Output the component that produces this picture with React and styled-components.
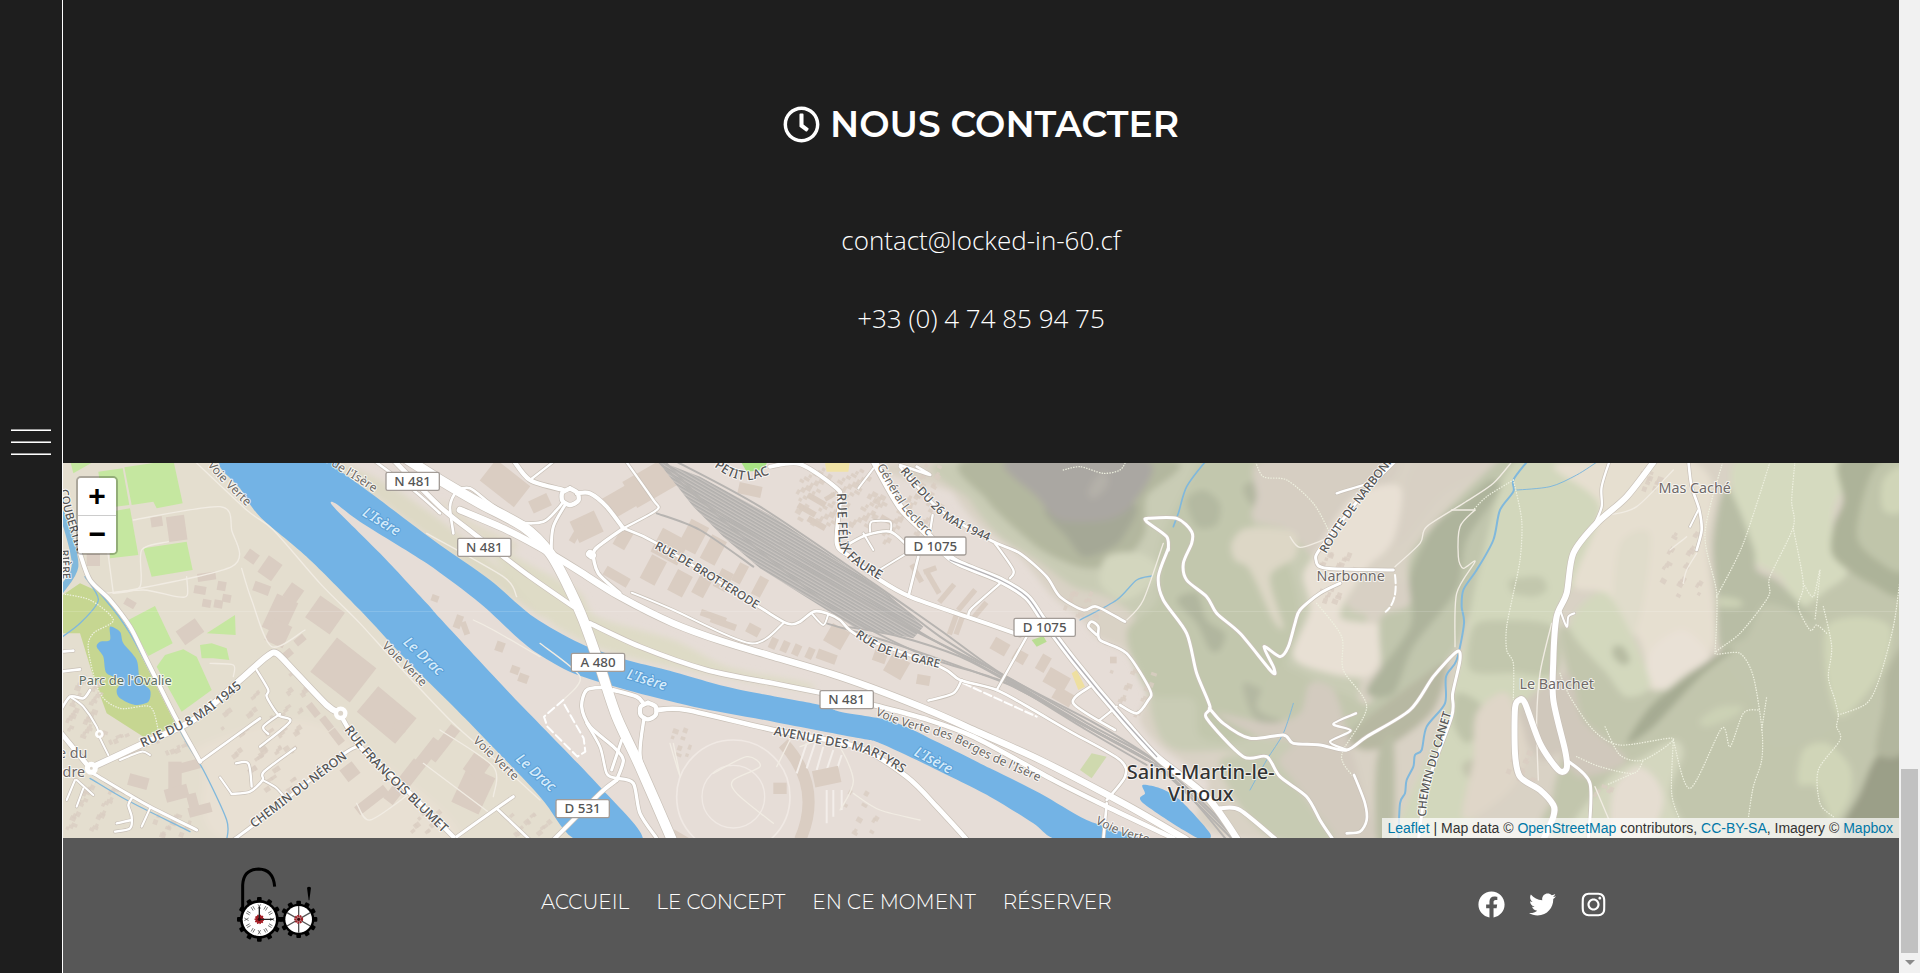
import React from "react";
import styled, { createGlobalStyle } from "styled-components";
import { FaRegClock, FaFacebook, FaTwitter, FaInstagram } from "react-icons/fa";

const GlobalStyle = createGlobalStyle`
  * { box-sizing: border-box; }
  body { margin: 0; background: #1e1e1e; color: #fff; font-family: "Open Sans", sans-serif; }
`;

const Page = styled.div`
  display: flex;
  min-height: 100vh;
`;

const Sidebar = styled.aside`
  flex: 0 0 63px;
  display: flex;
  align-items: center;
  justify-content: center;
  padding-bottom: 90px;
  background: #1e1e1e;
  border-right: 1px solid #fff;
`;

const MenuButton = styled.button`
  display: flex;
  flex-direction: column;
  gap: 10px;
  width: 40px;
  padding: 0;
  border: 0;
  background: none;
  cursor: pointer;
`;

const MenuBar = styled.span`
  height: 2px;
  background: #fff;
  border-top: 1px solid #9a9a9a;
`;

const Main = styled.main`
  flex: 1;
  min-width: 0;
  display: flex;
  flex-direction: column;
`;

const Contact = styled.section`
  display: flex;
  flex-direction: column;
  align-items: center;
  padding: 102px 0 125px;
`;

const Title = styled.h2`
  display: flex;
  align-items: center;
  gap: 10px;
  margin: 0 0 74px;
  font: 600 36px/44px Montserrat, Inter, sans-serif;
  text-transform: uppercase;
`;

const ContactLink = styled.a`
  color: #fff;
  font-size: 26px;
  font-weight: 300;
  line-height: 40px;
  text-decoration: none;
  & + & { margin-top: 38px; }
`;

const MapFrame = styled.section`
  position: relative;
  height: 375px;
  overflow: hidden;
  background: #e6ded4;
`;

const MapDrawing = styled.svg`
  display: block;
  width: 100%;
  height: 100%;
`;

const ZoomControl = styled.div`
  position: absolute;
  top: 13px;
  left: 13px;
  display: flex;
  flex-direction: column;
  border: 2px solid rgba(0, 0, 0, 0.25);
  border-radius: 5px;
`;

const ZoomButton = styled.button`
  width: 38px;
  height: 37px;
  padding: 0;
  border: 0;
  border-radius: 0 0 3px 3px;
  background: #fff;
  color: #000;
  font: 700 30px/40px "Liberation Mono", monospace;
  cursor: pointer;
  &:first-child {
    height: 38px;
    border-bottom: 1px solid #ccc;
    border-radius: 3px 3px 0 0;
  }
`;

const Attribution = styled.div`
  position: absolute;
  right: 0;
  bottom: 0;
  padding: 0 6px;
  background: rgba(255, 255, 255, 0.7);
  color: #333;
  font: 14px/20px "Liberation Sans", sans-serif;
  a { color: #0078a8; text-decoration: none; }
`;

const Footer = styled.footer`
  flex: 1;
  display: grid;
  grid-template-columns: 478fr 937fr 421fr;
  align-items: center;
  min-height: 135px;
  padding-bottom: 3px;
  background: #575757;
`;

const LogoLink = styled.a`
  justify-self: center;
  width: 82px;
  height: 78px;
  margin-right: 50px;
`;

const FooterNav = styled.nav`
  display: flex;
  gap: 27px;
  padding-bottom: 5px;
`;

const NavLink = styled.a`
  color: #fff;
  font: 300 20px/28px Montserrat, Inter, sans-serif;
  text-decoration: none;
  text-transform: uppercase;
`;

const Socials = styled.div`
  display: flex;
  gap: 24px;
  a { display: flex; color: #fff; }
`;

const ScrollTrack = styled.div`
  flex: 0 0 21px;
  display: flex;
  flex-direction: column;
  justify-content: flex-end;
  align-items: center;
  background: #f1f1f1;
`;

const ScrollThumb = styled.div`
  width: 17px;
  height: 184px;
  background: #c1c1c1;
`;

const ScrollArrow = styled.div`
  margin: 7px 0 8px;
  border: 5px solid transparent;
  border-top-color: #8b8b8b;
  border-bottom: 0;
`;

/* ---------- map geometry: three drawing units to one screen pixel ---------- */

const parse = (s) => s.trim().split(/\s+/).map((p) => p.split(",").map(Number));

function curve(s, dx = 0, closed = false) {
  const p = parse(s).map(([x, y]) => [x + dx, y]);
  const n = p.length;
  const at = (i) => (closed ? p[(i + n) % n] : p[Math.max(0, Math.min(n - 1, i))]);
  let d = `M${p[0]}`;
  for (let i = 0; i < (closed ? n : n - 1); i++) {
    const [a, b, c, e] = [at(i - 1), at(i), at(i + 1), at(i + 2)];
    const c1 = [0, 1].map((k) => Math.round(b[k] + (c[k] - a[k]) / 7));
    const c2 = [0, 1].map((k) => Math.round(c[k] - (e[k] - b[k]) / 7));
    d += `C${c1} ${c2} ${c}`;
  }
  return closed ? d + "Z" : d;
}

const A = 0, B = 1140, C = 2340, D = 3360, E = 4440;

const terrain = [
  ["#e4decf", A, "0,0 480,0 900,440 1560,1140 0,1140"],
  ["#e8e0d3", A, "420,860 700,780 900,860 1190,1140 500,1140 430,930"],
  ["#ddd9c5", A, "800,0 960,60 1140,180 1400,390 1440,420 1440,470 1200,300 960,120"],
  ["#dedbc6", B, "120,230 260,310 420,400 470,470 700,540 860,620 1100,670 1100,690 850,650 560,590 420,540 300,460"],
  ["#e0dac7", B, "0,120 100,190 230,250 200,270 60,190"],
  ["#d9d2c5", C, "300,0 3300,0 3300,1140 1250,1140 1100,960 960,860 900,780 920,690 860,580 770,530 720,470 640,410 540,290 420,200 340,100"],
  ["#c9ccb5", C, "340,0 1500,0 1500,1000 1210,880 1010,870 940,780 900,500 800,410 700,380 590,300 480,230 390,120"],
  ["#b3b79f", C, "380,0 1000,0 920,110 915,220 850,300 740,325 620,280 530,210 440,120"],
  ["#a5a896", C, "620,140 880,130 850,230 800,270 730,290 680,230"],
  ["#aaa7a2", C, "500,0 920,0 880,130 800,180 660,180 590,110"],
  ["#b4b0a9", C, "770,50 800,40 800,80 760,115 745,95"],
  ["#d3d6be", C, "800,290 900,280 960,330 900,400 840,420 780,370"],
  ["#c2c7ad", C, "960,250 1050,60 1110,0 1430,0 1280,100 1240,220 1340,300 1380,470 1340,620 1400,740 1200,840 1080,830 1060,720 930,700 860,520 950,420"],
  ["#b4b9a1", C, "1040,120 1090,90 1140,130 1130,195 1070,200"],
  ["#b1b69f", C, "1010,420 1070,400 1100,480 1155,520 1140,570 1110,570 1070,490"],
  ["#b3b7a0", C, "1210,80 1290,50 1370,60 1290,110 1240,140"],
  ["#b4b8a2", C, "1210,670 1280,690 1360,660 1340,720 1310,800 1240,770"],
  ["#d6cec2", D, "250,0 650,0 570,130 470,240 400,290 330,210 220,180 230,110"],
  ["#ddd7c6", D, "155,250 200,205 340,215 345,290 270,350 310,500 280,480 210,330 165,300"],
  ["#e8e0d4", D, "400,290 520,110 660,80 640,240 560,330 480,470 610,500 600,600 560,650 450,640 340,590 390,450 370,350"],
  ["#d8d0c4", D, "560,330 680,230 800,90 1000,0 720,0 640,240 500,430 650,470 700,380"],
  ["#c1c6ad", D, "600,480 690,430 700,270 960,0 1080,0 980,200 930,330 860,480 830,560 700,740 560,850 480,800 600,690"],
  ["#aeb49c", D, "760,200 860,120 930,60 960,90 860,240 830,390 700,560 640,700 560,690 690,500 690,350"],
  ["#b7b8a2", D, "510,820 700,670 800,610 760,750 640,850 550,870"],
  ["#c3c7ae", D, "300,620 440,680 560,740 500,800 380,730 320,780 230,740"],
  ["#d3cbbf", D, "390,670 460,690 500,810 540,960 580,1140 430,1140 300,920 340,850 240,830 110,760 270,790 360,760"],
  ["#c7cbb3", D, "120,900 280,900 400,1050 460,1140 290,1140 180,1040"],
  ["#babda6", D, "590,1140 590,900 640,830 640,1140"],
  ["#d2d7bc", D, "900,320 1010,0 1300,0 1440,200 1160,400 1100,700 880,850 1000,900 820,1140 650,1140 780,800 850,560"],
  ["#c2c7ad", D, "880,500 960,480 1120,500 1130,640 1000,640 870,630"],
  ["#c2c7ad", D, "990,360 1080,350 1100,390 1060,410 1000,400"],
  ["#bfc4aa", D, "830,700 900,730 910,800 860,850 820,790"],
  ["#c3c4ad", D, "850,910 920,890 970,930 920,960 860,950"],
  ["#c2c6ad", E, "60,500 200,600 340,690 580,560 1100,300 1100,1140 80,1140 40,1000 100,760"],
  ["#e6dfd0", E, "40,20 180,0 440,0 520,80 500,250 520,430 520,560 420,640 340,690 300,540 190,400 100,370 180,140"],
  ["#e9e1d6", E, "340,560 430,510 510,590 440,640 370,690 320,640"],
  ["#e0dccb", E, "240,250 330,220 310,430 260,570 220,460"],
  ["#d3d8bd", E, "90,500 200,400 330,660 260,710 200,640"],
  ["#d5dabf", E, "590,0 920,0 880,150 880,260 920,340 860,390 780,440 720,350 650,310 610,240"],
  ["#b8bda5", E, "560,80 640,260 650,330 720,370 830,500 770,570 740,600 670,520 600,570 540,560 530,400 520,240"],
  ["#c2c6ae", E, "680,430 830,500 850,660 880,800 700,860 620,700 540,580 620,530"],
  ["#adb399", E, "900,0 1100,0 1100,390 990,370 880,290 880,200 910,120"],
  ["#c0c5aa", E, "1000,30 1100,0 1100,320 1010,300 950,220"],
  ["#d0d5b8", E, "1030,60 1090,20 1090,150 1030,150"],
  ["#d0d5b8", E, "860,500 960,470 1050,500 1040,600 980,700 900,770 860,650"],
  ["#d0d5b8", E, "790,870 860,850 930,920 930,1010 880,1080 830,980 775,970"],
  ["#ccd1b5", E, "480,780 540,740 610,740 580,770 500,800"],
  ["#ccd1b5", E, "540,410 600,420 600,440 540,440"],
  ["#a6ab93", E, "580,570 480,650 340,800 260,850 330,740 440,650 540,580"],
  ["#9b9f88", E, "1100,830 1010,890 960,1000 900,1140 1100,1140"],
  ["#b2b69e", E, "1040,640 1100,560 1100,860 1010,880 1030,740"],
  ["#d4d7bf", E, "310,890 400,840 430,880 390,1000 420,1140 90,1140 200,960"],
  ["#e5ddd1", E, "220,990 290,920 350,960 370,1030 320,1140 220,1140"],
  ["#d0c8bc", E, "-70,760 80,640 130,780 260,900 120,950 60,880 0,900"],
  ["#dfd6c8", E, "-190,760 -100,700 -40,860 -90,990 -230,1080 -200,900"],
  ["#b7bca3", E, "220,560 250,560 270,600 250,615 220,590"],
];

const parks = [
  ["#c6d691", "0,410 60,370 150,410 230,560 350,800 250,830 140,760 100,650 60,520 0,520"],
  ["#c5e7a0", "30,0 110,0 40,40"],
  ["#c5e7a0", "115,35 188,25 208,135 130,145"],
  ["#c5e7a0", "193,22 340,0 368,130 290,145 280,125 215,135"],
  ["#c5e7a0", "150,155 210,145 235,285 150,295"],
  ["#c5e7a0", "250,265 380,245 398,330 275,350"],
  ["#c5e7a0", "205,480 285,438 338,550 265,588"],
  ["#c5e7a0", "290,620 315,585 370,568 410,590 455,690 365,755"],
  ["#c5e7a0", "440,520 525,465 527,525"],
  ["#c5e7a0", "420,555 455,550 500,565 508,600 460,595 425,595"],
  ["#a9e285", "2040,0 2125,0 2110,30 2060,35"],
  ["#b9dd92", "2915,540 2950,528 2960,545 2930,560"],
  ["#cfd9ae", "3095,880 3140,890 3095,955 3060,930"],
  ["#f0e2a5", "2295,10 2370,0 2365,35 2300,35"],
  ["#eedfa0", "3035,640 3050,630 3075,680 3055,690"],
];

const river =
  "488,0 540,85 600,170 740,290 900,450 1040,600 1240,800 1440,1010 1550,1140 1748,1140 1610,970 1340,690 1140,475 1100,430 960,280 822,142 826,130 900,185 1100,310 1260,430 1380,540 1440,585 1540,640 1700,690 1900,740 2140,785 2400,835 2460,850 2590,910 2790,1010 2920,1090 3000,1140 3240,1140 3080,1080 2940,1000 2790,925 2640,850 2500,785 2340,755 2280,735 2020,685 1820,630 1700,600 1560,550 1420,470 1290,360 1140,255 960,120 850,40 800,0";

const ponds = [
  "150,500 180,515 190,550 230,600 240,660 270,690 265,725 225,735 180,715 170,690 185,660 140,640 130,590 110,560 120,545 150,540",
  "3248,975 3300,985 3360,1020 3450,1120 3430,1140 3370,1110 3245,1025 3255,1000",
];

const buildings = `350,205 55 75 -8;290,185 35 30 -8;575,290 36 34 35;630,325 50 60 35;605,385 50 30 20;660,465 70 110 25;655,520 60 70 25;700,400 45 50 35;795,465 90 80 35;850,630 150 130 38;980,765 150 100 40;390,515 70 50 -35;440,350 55 24 -8;485,378 26 28 10;440,430 26 24 10;475,432 26 24 10;500,415 26 24 10;420,390 36 24 10;210,430 34 22 30;100,300 40 36 0;720,540 34 22 -40;685,580 26 22 -40;760,750 22 44 -38;800,790 22 44 -38;830,830 24 50 -38;870,935 46 44 -38;1150,850 34 120 38;1085,905 36 160 38;1030,965 36 150 38;935,1020 30 110 52;1240,990 90 120 25;1250,920 60 60 35;380,920 80 30 -15;345,950 40 90 0;350,1000 70 40 -15;420,1050 70 30 -15;400,1030 30 60 -15;235,965 60 36 15;1125,415 22 20 20;1195,485 22 40 20;1215,505 18 40 -20;1320,560 26 30 20;1365,630 26 24 20;1390,655 30 26 20;1335,70 130 80 38;1440,130 60 40 -25;1580,200 80 70 -25;1690,120 110 70 -30;1770,70 140 90 -30;1550,220 20 60 30;1690,235 40 60 30;1780,330 50 80 28;1830,260 90 80 28;1900,230 60 90 28;1960,270 50 80 28;1860,370 50 70 28;1930,370 40 80 28;1990,360 40 60 28;2040,340 30 60 28;2100,380 30 60 28;1960,470 80 20 20;1990,490 80 20 20;2080,510 40 30 28;1670,350 80 30 30;2140,550 22 34 25;2175,560 22 34 25;2210,570 22 34 25;2250,580 22 34 25;2330,530 60 60 30;2300,590 60 30 20;2510,620 60 60 30;2460,590 40 34 20;2590,660 40 30 10;2300,950 80 50 -12;2070,90 70 34 12;2310,110 14 34 60;2240,150 60 18 30;2270,190 60 18 30;2270,120 60 18 30;2480,180 40 16 30;2610,330 40 16 -20;2620,370 70 16 60;2660,400 70 16 -50;2720,420 80 16 -50;2760,450 60 16 -50;2570,340 60 16 60;2700,490 16 70 20;2680,490 16 70 20;2820,560 50 40 30;2880,590 40 36 30;2950,610 30 50 30;2990,660 70 50 30;3010,710 60 40 30;3160,600 20 20 0;1860,1130 50 20 30;1020,800 40 24 20;2160,985 40 34 0`
  .split(";")
  .map((s) => s.trim().split(/[ ,]/).map(Number));

/* small houses, spread over the residential blocks [x, y, width, height, count, angle] */
const hamlets = [
  [20, 640, 110, 200, 40, 20], [140, 820, 240, 60, 24, -25], [20, 960, 150, 150, 26, 25],
  [480, 660, 150, 230, 24, -35], [640, 640, 90, 240, 22, -35], [560, 860, 140, 130, 22, -35],
  [280, 1060, 110, 70, 12, 20], [1050, 1050, 90, 80, 12, -40], [1330, 1060, 130, 70, 12, -40],
  [2210, 20, 240, 170, 75, 30], [2440, 100, 180, 140, 40, 30], [2560, 10, 80, 120, 18, 30],
  [3010, 390, 110, 90, 16, 20], [3150, 620, 130, 160, 18, 20], [3780, 270, 110, 60, 14, 20],
  [3780, 380, 60, 40, 8, 20], [4340, 850, 80, 110, 12, 20], [4740, 20, 60, 60, 10, 20],
  [4800, 210, 120, 190, 22, 30], [1830, 800, 60, 100, 8, 20], [4600, 970, 60, 30, 5, 20],
  [2350, 970, 100, 160, 10, 30],
];
const houses = hamlets.flatMap(([x, y, w, h, n, r], k) =>
  Array.from({ length: n }, (_, i) => {
    const u = ((i + 1) * 0.618034 + k * 0.13) % 1;
    const v = ((i + 1) * 0.754878 + k * 0.29) % 1;
    return [Math.round(x + u * w), Math.round(y + v * h), 10 + (i % 3) * 4, 10 + (i % 2) * 5, r];
  })
);

const roads = [
  [12, A, "60,280 90,360 150,420 210,500 260,600 340,760 420,905"],
  [18, A, "90,925 240,855 400,780 540,660 620,590 650,580 700,630 800,735 840,760"],
  [13, A, "850,780 900,860 1000,950 1180,1130"],
  [14, A, "0,815 90,925"], [9, A, "90,935 200,1000 270,1040 410,1110"],
  [8, A, "90,690 70,715 30,710 0,755"], [6, A, "30,710 70,740 110,800 118,830 145,885"],
  [8, A, "0,575 40,572"], [8, A, "0,635 60,628"], [7, A, "590,630 625,690 620,710 655,765 690,785 600,860"],
  [7, A, "660,762 610,800 625,822"], [8, A, "420,905 600,775"],
  [9, A, "520,1140 600,1080 840,890 890,860"], [7, A, "515,1002 570,995 608,960 612,935 705,865"],
  [7, A, "528,910 565,910 575,980"], [6, A, "480,952 515,1002"], [6, A, "608,960 650,985 680,1020"],
  [7, A, "215,1015 205,1035 215,1070 210,1105 165,1115"], [6, A, "270,1045 245,1100"], [6, A, "180,900 245,875 270,885"],
  [7, A, "170,1090 215,1080"], [6, A, "45,960 20,1020"], [6, A, "50,960 100,1005"], [6, A, "70,985 50,1040"],
  [9, A, "1190,1130 1310,1045 1360,1010"], [8, A, "1310,1045 1410,1140"],
  [14, B, "-140,0 0,140 100,220 270,350 400,440"], [8, B, "-200,0 -80,90 0,160"],
  [20, B, "60,150 200,210 330,280 420,335 540,410 700,490 850,545 1000,590 1200,650 1440,740 1600,810 1800,900 2050,1030 2240,1140"],
  [14, B, "450,490 600,560 800,630 1000,670 1150,700 1300,735 1450,775 1600,830 1840,960 2000,1040 2200,1135"],
  [30, B, "-110,-10 0,60 120,130 250,200 330,280 390,390 430,480 480,620 530,770 600,920 700,1150"],
  [8, B, "40,220 30,140 50,95 90,85 150,130 240,185 310,185 350,150 370,125"],
  [13, B, "220,0 270,60 370,90"], [12, B, "410,100 450,100 500,140 550,205"],
  [13, B, "390,85 412,98 415,122 390,135 367,122 367,98 390,85"],
  [8, B, "550,205 650,250 940,430 1040,490 1080,485 1120,455 1160,460 1200,480 1260,530 1500,620 1560,660 1670,690 1780,750 1900,820 2040,900 2055,950 2000,1020"],
  [9, B, "378,130 340,200 335,280 355,330"], [7, B, "550,205 650,150 640,120 555,0"], [7, B, "270,60 360,-10"],
  [10, B, "550,205 480,255 460,280 475,340 540,400"], [24, B, "450,282 456,286"],
  [6, B, "575,398 700,450 930,550 1030,490"], [6, B, "1115,460 1150,495 1165,462"],
  [12, B, "990,20 1080,12 1190,85 1200,120 1190,250 1230,290 1320,360 1410,410 1580,470 1740,525"],
  [6, B, "1300,25 1255,85"], [8, B, "1230,250 1280,225 1350,215 1395,250"], [6, B, "1290,215 1295,185 1350,185 1352,215"],
  [6, B, "1270,220 1300,270"], [6, B, "1400,280 1310,335"], [8, B, "1435,290 1405,410"],
  [12, B, "520,690 590,710 610,730"], [13, B, "624,728 647,740 647,765 624,778 602,765 602,740 624,728"],
  [14, B, "650,750 740,750 1000,810 1250,860 1400,950 1490,1040 1590,1150"],
  [10, B, "490,682 440,690 425,740 450,800 520,860 550,900 530,960"], [8, B, "440,790 480,860 500,940 530,955"],
  [12, B, "530,960 480,1000 340,1140"], [10, B, "530,955 580,970 600,1060 650,1135"], [9, B, "545,840 515,930"],
  [10, B, "612,775 600,880 620,980"],
  [20, C, "100,0 180,140 260,220 340,300 480,360 560,410 610,480 700,600 850,780 950,890 1100,1010 1200,1150"],
  [8, C, "180,15 270,45 230,20"], [8, C, "180,20 300,150 450,240 540,280 620,350 660,410 730,450 770,440 855,485"],
  [7, C, "465,250 520,330 510,355"], [7, C, "270,215 278,165"], [7, C, "480,370 395,445 385,470"],
  [7, C, "560,530 470,690"], [7, C, "365,660 340,700 265,722"],
  [8, C, "770,525 745,500 755,485 775,500 780,540 860,580 930,690 925,720 890,760 840,735"],
  [8, C, "750,680 700,730 825,810"], [7, C, "780,780 830,740"], [12, C, "1140,1045 1200,1050 1310,1140"],
  [8, C, "800,1030 790,1140"],
  [9, C, "985,270 980,230 920,185 925,175 1010,175 1055,215 1055,250 1030,310 1040,360 1100,410 1130,460 1200,520 1295,635 1302,625 1272,560 1320,590 1345,560 1365,490 1380,450 1440,400 1500,370"],
  [9, C, "985,265 955,350 970,420 1040,520 1070,640 1110,740 1100,775 1210,890 1280,890 1320,950 1400,1010 1440,1080 1480,1140"],
  [9, D, "88,745 130,790 210,835 310,825 340,850 420,855 500,870 560,830 690,750 760,650 830,575 840,600 818,700 815,770 740,980 715,1140"],
  [7, D, "528,760 460,792 512,812 450,845 500,870"], [8, D, "522,945 555,1030 560,1080 540,1115 500,1120"],
  [9, D, "640,330 440,325 408,300 425,260 560,90 650,0"], [7, D, "470,100 550,75"],
  [18, E, "345,0 260,110 170,190 100,280 80,400 50,470 40,600 40,720 75,870 80,925 55,930 0,850 -45,730 -62,720 -75,745 -75,880 -60,950 0,990 40,1035 40,1070 10,1140"],
  [9, E, "80,900 150,970 145,1140"], [7, E, "210,0 185,80 185,140 165,190"], [8, E, "445,0 455,80 478,150 485,210 470,270"],
  [6, E, "60,450 80,500 85,470 103,460"], [6, E, "475,150 450,200"],
];

const paths = [
  [A, "545,325 575,420 635,560 735,510"], [A, "160,400 240,380 245,270 325,245"], [A, "220,180 480,140 515,210 515,320 160,400"],
  [A, "130,400 250,390 350,410 382,405 380,350"], [A, "400,0 560,150 640,210 780,370 900,490 1000,600 1180,790 1330,920 1440,1020"],
  [A, "140,250 160,400"], [A, "1090,910 1290,1060"], [A, "890,1030 930,1080 1050,1000"], [A, "1140,810 1300,920 1300,1010"],
  [A, "450,610 520,615 520,650"], [A, "1100,220 1330,350 1370,410"], [A, "1240,480 1300,510 1440,590"],
  [B, "300,550 420,650 370,720"], [B, "700,850 720,950 690,850"], [B, "1080,860 1180,840 1240,960 1200,1050"],
  [B, "820,940 920,890 960,920 880,960 890,1000 1000,1090"], [B, "1050,840 1010,920"], [B, "1240,1000 1320,1050 1440,1080"],
  [C, "855,485 910,420 970,250"], [D, "645,320 720,250 740,200 850,130 940,70 1000,0"], [D, "815,150 885,150"],
  [D, "885,150 840,200 835,290 850,325 885,305 830,400 825,560"], [D, "330,230 360,262 430,240"],
  [D, "1115,490 1080,640 1070,780 1075,960"], [E, "210,165 290,140 400,30"], [E, "390,270 440,230"], [E, "430,370 440,330 470,280"],
  [E, "165,980 205,1075"],
];

const trails = [
  [D, "225,0 250,50 320,60 400,130 450,220"], [D, "410,430 485,530 490,630 560,740 490,870 490,910 520,950"],
  [D, "1000,60 1025,180 1020,300 1000,400 980,500 980,570 1000,610 1000,720"], [C, "670,30 720,20 790,40 840,30 860,0"],
  [D, "1000,60 920,110 880,150"],
  [E, "550,0 495,220 530,400 525,580"], [E, "692,0 610,250 530,410"],
  [E, "765,0 755,120 760,200 690,350 685,410 600,520 525,580 600,580 640,650 665,800 665,900 640,980 625,1075"],
  [E, "760,205 790,370 775,440 810,510 830,495 860,520"], [E, "790,370 820,410 840,330 825,480"],
  [E, "850,440 875,560 865,650 885,720 895,765 890,800 900,840 835,930 840,1030 880,1070"],
  [E, "895,765 980,730 1020,650 1060,500 1080,360"], [E, "60,640 90,710 160,810 240,855 400,835 310,900 240,885 195,800"],
  [E, "400,840 450,985 545,805 570,860 610,760 655,750"], [E, "400,840 395,1000 420,1080"], [E, "110,890 180,920 280,940 310,900"],
  [E, "280,940 200,975"], [E, "665,810 680,710"], [A, "0,400 90,420 160,480 100,520 85,570 120,700 180,745 270,740 295,810"],
];

const streams = [
  [20, A, "-20,110 20,200 45,320 0,395"], [4, A, "75,350 115,420 60,490 0,535"],
  [4, A, "120,400 210,520 370,830 430,930 500,1080 500,1140"], [4, A, "90,955 200,1020 390,1115"],
  [6, D, "1045,0 1000,60 1000,95 960,150 940,240 890,330 850,390 845,440 852,490 830,600 798,650 795,730 740,800 725,870 705,885 700,920 680,960 675,1000 660,1030 655,1140"],
  [5, C, "1100,0 1040,80 1015,160 1000,200"], [4, C, "935,348 890,360 830,420 720,480"], [3, C, "1360,730 1330,820 1280,900 1230,990"],
  [3, E, "180,0 110,45 30,80 -70,90"],
];

const rails = [
  "1790,0 1950,140 2300,360 2560,510 2840,650 3100,800 3280,900 3400,1020 3520,1140",
  "1840,0 2100,140 2440,370 2640,510 2830,645 3105,790 3290,905 3420,1020 3540,1140",
  "1810,0 2000,190 2330,450 2600,590 2830,665 3090,805 3280,910 3410,1020 3530,1140",
  "2160,250 2460,440 2620,540 2850,665 3080,800 3270,905 3390,1010 3500,1140",
  "2280,280 2470,400 2640,530 2850,660 3110,815 3290,915",
  "2300,490 2500,550 2700,620 2860,680 3060,790 3260,900",
  "2360,500 2520,530 2700,590 2860,675 3080,810 3260,915",
  "1790,160 1920,210 2080,320",
];

const roadNames = [
  ["rue8", A, "248,862 330,825 410,785 480,735 560,670", "RUE DU 8 MAI 1945", 38],
  ["blum", A, "852,810 920,895 1010,985 1180,1150", "RUE FRANÇOIS BLUMET", 38],
  ["nero", A, "582,1105 860,895", "CHEMIN DU NÉRON", 37],
  ["coub", A, "0,90 15,160 50,270", "COUBERTIN", 34],
  ["iere", A, "2,270 10,380", "RIÈRE", 32],
  ["brot", B, "642,265 760,330 960,455", "RUE DE BROTTERODE", 35],
  ["gare", B, "1245,530 1320,575 1420,605 1520,630", "RUE DE LA GARE", 35],
  ["mart", B, "1000,825 1160,855 1260,875 1330,905 1440,975", "AVENUE DES MARTYRS", 38],
  ["lac", B, "822,20 870,50 930,60 1010,35", "PETIT LAC", 38],
  ["faur", B, "1190,100 1194,180 1198,250 1215,285 1260,325 1380,395", "RUE FÉLIX FAURE", 39],
  ["mai", C, "180,35 240,105 310,175 380,215 470,255", "RUE DU 26 MAI 1944", 35],
  ["narb", D, "438,282 480,215 560,105 690,-60", "ROUTE DE NARBONNE", 35],
  ["cane", D, "738,1070 745,1000 780,870 820,740", "CHEMIN DU CANET", 35],
];
const pathNames = [
  ["vv1", A, "442,15 480,60 580,160", "Voie Verte"], ["vv2", A, "965,560 1110,705", "Voie Verte"],
  ["vv3", A, "1238,845 1380,980", "Voie Verte"], ["ise0", A, "790,0 850,40 900,70 990,130", "s de l'Isère"],
  ["berg", C, "105,765 180,795 330,840 450,900 620,975", "Voie Verte des Berges de l'Isère"],
  ["vv5", C, "765,1090 840,1125 960,1160", "Voie Verte"],
  ["lecl", C, "110,20 150,90 200,165 275,240", "Général Leclerc"],
];
const riverNames = [
  ["r1", A, "905,165 1060,260", "L'Isère"], ["r2", A, "1028,550 1180,690", "Le Drac"],
  ["r3", B, "225,900 380,1040", "Le Drac"], ["r4", B, "558,655 720,705", "L'Isère"], ["r5", C, "220,885 380,970", "L'Isère"],
];
const shields = [
  [1058, 64, "N 481"], [1273, 262, "N 481"], [1614, 607, "A 480"], [2360, 719, "N 481"],
  [1568, 1046, "D 531"], [2626, 258, "D 1075"], [2954, 502, "D 1075"],
];
const places = [
  [196, 675, "Parc de l'Ovalie", 39, "#5d6e62"], [3872, 363, "Narbonne", 43, "#6f6968"],
  [4904, 99, "Mas Caché", 43, "#6f6968"], [4490, 688, "Le Banchet", 43, "#6f6968"],
  [38, 895, "e du", 43, "#6f6968"], [36, 950, "idre", 43, "#6f6968"],
  [3422, 956, "Saint-Martin-le-", 60, "#333"], [3422, 1022, "Vinoux", 60, "#333"],
];

const Label = styled.text`
  font-family: "Noto Sans", "Open Sans", sans-serif;
  font-size: ${(p) => p.$size}px;
  font-weight: ${(p) => p.$weight || 500};
  font-style: ${(p) => (p.$italic ? "italic" : "normal")};
  fill: ${(p) => p.$color};
  stroke: ${(p) => p.$halo || "rgba(255,255,255,.75)"};
  stroke-width: ${(p) => (p.$halo === "none" ? 0 : 6)}px;
  stroke-linejoin: round;
  paint-order: stroke;
`;

const Line = styled.path`
  fill: none;
  stroke: ${(p) => p.$color};
  stroke-width: ${(p) => p.$w}px;
  stroke-linecap: round;
  stroke-linejoin: round;
  stroke-dasharray: ${(p) => p.$dash || "none"};
`;

function CityMap() {
  const guides = [...roadNames, ...pathNames, ...riverNames];
  return (
    <MapDrawing viewBox="9 9 5508 1125" preserveAspectRatio="xMidYMid slice" role="img" aria-label="Carte de Saint-Martin-le-Vinoux">
      <defs>
        {guides.map(([id, dx, pts]) => <path key={id} id={id} d={curve(pts, dx)} />)}
        <pattern id="tracks" width="10" height="9" patternUnits="userSpaceOnUse" patternTransform="rotate(30)">
          <rect width="10" height="9" fill="#c9c4c0" />
          <rect width="10" height="5" fill="#b1afad" />
        </pattern>
        <filter id="relief" x="0" y="0" width="1" height="1">
          <feGaussianBlur stdDeviation="9" />
        </filter>
      </defs>
      <rect width="5600" height="1140" fill="#e6ddd7" />
      <g filter="url(#relief)">
        {terrain.map(([fill, dx, pts], i) => <path key={i} d={curve(pts, dx, true)} fill={fill} />)}
      </g>
      {parks.map(([fill, pts], i) => <polygon key={i} points={pts} fill={fill} />)}
      <circle cx="2020" cy="1010" r="170" fill="none" stroke="#f0e9e4" strokeWidth="5" />
      <circle cx="2020" cy="1010" r="94" fill="none" stroke="#f0e9e4" strokeWidth="4" />
      <path d="M2170 850Q2290 980 2220 1140" fill="none" stroke="#dacdc2" strokeWidth="36" />
      <path d="M2240 850l-30 90M2265 850l-25 75M2290 860l-20 70M2320 870l-20 60M2345 885l-20 60M2300 990v100M2320 990v80M2345 990v60" stroke="#f3eeea" strokeWidth="6" />
      <g fill="#dacdc2">
        {buildings.map(([x, y, w, h, r], i) => (
          <rect key={i} x={x - w / 2} y={y - h / 2} width={w} height={h} transform={`rotate(${r} ${x} ${y})`} />
        ))}
        {houses.map(([x, y, w, h, r], i) => (
          <rect key={i} x={x} y={y} width={w} height={h} opacity=".8" transform={`rotate(${r} ${x} ${y})`} />
        ))}
      </g>
      <path d={curve(river, 0, true)} fill="#73b3e5" />
      {ponds.map((pts, i) => <path key={i} d={curve(pts, 0, true)} fill="#73b3e5" />)}
      {streams.map(([w, dx, pts], i) => <Line key={i} d={curve(pts, dx)} $color="#80b8dc" $w={w} />)}
      <path d="M1790 0L1920 50 2140 170 2480 400 2590 500 2560 535 2380 500 2100 325 1990 230 1900 140Z" fill="url(#tracks)" />
      {rails.map((pts, i) => <Line key={i} d={curve(pts)} $color="#b7b4b1" $w={6} />)}
      {paths.map(([dx, pts], i) => <Line key={i} d={curve(pts, dx)} $color="#f1ece3" $w={4} />)}
      {trails.map(([dx, pts], i) => <Line key={i} d={curve(pts, dx)} $color="#eef0df" $w={4} $dash="1 7" />)}
      <Line d="M1510 720l-58 50 10 30 90 90 24-15-5-40-60-105" $color="#fff" $w={6} $dash="24 12" />
      <Line d="M2710 670l220 100M4005 345q10 80-28 110" $color="#fff" $w={6} $dash="24 10" />
      {roads.map(([w, dx, pts], i) => <Line key={i} d={curve(pts, dx)} $color="#c9c1b8" $w={w + 4} />)}
      {roads.map(([w, dx, pts], i) => <Line key={i} d={curve(pts, dx)} $color="#fff" $w={w} />)}
      <Line d={curve("330,300 480,360 560,410 610,480 700,600 850,780 950,890", C)} $color="#b4b2b5" $w={4} />
      <circle cx="842" cy="760" r="14" fill="#dcd5ca" stroke="#fff" strokeWidth="13" />
      <circle cx="94" cy="925" r="12" fill="#dcd5ca" stroke="#fff" strokeWidth="15" />
      <circle cx="118" cy="822" r="9" fill="#dcd5ca" stroke="#fff" strokeWidth="8" />
      <path d="M9 454H5508" stroke="#fff" strokeWidth="2" opacity=".25" />
      {roadNames.map(([id, , , text, size]) => (
        <Label key={id} $size={size} $color="#555"><textPath href={`#${id}`}>{text}</textPath></Label>
      ))}
      {pathNames.map(([id, , , text]) => (
        <Label key={id} $size={36} $weight={400} $color="#6c6863"><textPath href={`#${id}`}>{text}</textPath></Label>
      ))}
      {riverNames.map(([id, , , text]) => (
        <Label key={id} $size={43} $italic $color="#d6ecfb" $halo="#5b9fd6"><textPath href={`#${id}`}>{text}</textPath></Label>
      ))}
      {shields.map(([x, y, text]) => {
        const w = text.length > 5 ? 184 : 160;
        return (
          <g key={`${x}`}>
            <rect x={x - w / 2} y={y - 27} width={w} height="54" rx="5" fill="#fff" stroke="#a39c97" strokeWidth="4" />
            <Label x={x} y={y + 14} textAnchor="middle" $size={40} $color="#555" $halo="none">{text}</Label>
          </g>
        );
      })}
      {places.map(([x, y, text, size, color]) => (
        <Label key={text} x={x} y={y} textAnchor="middle" $size={size} $weight={size > 50 ? 500 : 400} $color={color}>{text}</Label>
      ))}
    </MapDrawing>
  );
}

function Gear({ x, y, r, hole, teeth, children }) {
  return (
    <g transform={`translate(${x} ${y})`}>
      {Array.from({ length: teeth }, (_, i) => (
        <rect key={i} x="-7" y={-r - 9} width="14" height="16" rx="3" transform={`rotate(${(i * 360) / teeth})`} />
      ))}
      <circle r={r} />
      <circle r={hole} fill="#fff" />
      {children}
    </g>
  );
}

function Logo() {
  return (
    <svg viewBox="50 45 246 234" width="82" height="78" aria-hidden="true">
      <path d="M70 185V105Q72 58 118 57 162 58 166 110" fill="none" stroke="#000" strokeWidth="9" />
      <path d="M263 113q6-5 12 0l-5 38h-2z" />
      <Gear x={120} y={208} r={58} hole={50} teeth={12}>
        {Array.from({ length: 12 }, (_, i) => (
          <path key={i} d={i % 3 ? "M-3-44V-32M3-44V-32" : "M-4-45L4-32M4-45L-4-32"} stroke="#444" strokeWidth="2" transform={`rotate(${i * 30})`} />
        ))}
        <circle r="12" fill="#a51e26" stroke="#a51e26" strokeWidth="5" strokeDasharray="4 3" />
        <path d="M0-38V0H42" fill="none" stroke="#222" strokeWidth="4" />
        <circle r="5" fill="#3a0c0e" />
      </Gear>
      <Gear x={238} y={208} r={47} hole={40} teeth={12}>
        <path d="M0-40V40M-35-20L35 20M-35 20L35-20" stroke="#555" strokeWidth="4" />
        <circle r="10" fill="#c98f91" stroke="#9d2329" strokeWidth="7" strokeDasharray="5 2" />
        <circle r="5" fill="#3a0c0e" />
      </Gear>
    </svg>
  );
}

export default function App() {
  return (
    <>
      <GlobalStyle />
      <Page>
        <Sidebar>
          <MenuButton type="button" aria-label="Menu"><MenuBar /><MenuBar /><MenuBar /></MenuButton>
        </Sidebar>
        <Main>
          <Contact>
            <Title><FaRegClock size={37} />Nous contacter</Title>
            <ContactLink href="mailto:contact@locked-in-60.cf">contact@locked-in-60.cf</ContactLink>
            <ContactLink href="tel:+33474859475">+33 (0) 4 74 85 94 75</ContactLink>
          </Contact>
          <MapFrame>
            <CityMap />
            <ZoomControl>
              <ZoomButton type="button" aria-label="Zoom avant">+</ZoomButton>
              <ZoomButton type="button" aria-label="Zoom arrière">−</ZoomButton>
            </ZoomControl>
            <Attribution>
              <a href="#leaflet">Leaflet</a> | Map data © <a href="#osm">OpenStreetMap</a> contributors, <a href="#licence">CC-BY-SA</a>, Imagery © <a href="#mapbox">Mapbox</a>
            </Attribution>
          </MapFrame>
          <Footer>
            <LogoLink href="#accueil" aria-label="Locked in 60"><Logo /></LogoLink>
            <FooterNav>
              <NavLink href="#accueil">Accueil</NavLink>
              <NavLink href="#concept">Le concept</NavLink>
              <NavLink href="#moment">En ce moment</NavLink>
              <NavLink href="#reserver">Réserver</NavLink>
            </FooterNav>
            <Socials>
              <a href="#facebook" aria-label="Facebook"><FaFacebook size={27} /></a>
              <a href="#twitter" aria-label="Twitter"><FaTwitter size={27} /></a>
              <a href="#instagram" aria-label="Instagram"><FaInstagram size={27} /></a>
            </Socials>
          </Footer>
        </Main>
        <ScrollTrack aria-hidden="true"><ScrollThumb /><ScrollArrow /></ScrollTrack>
      </Page>
    </>
  );
}
